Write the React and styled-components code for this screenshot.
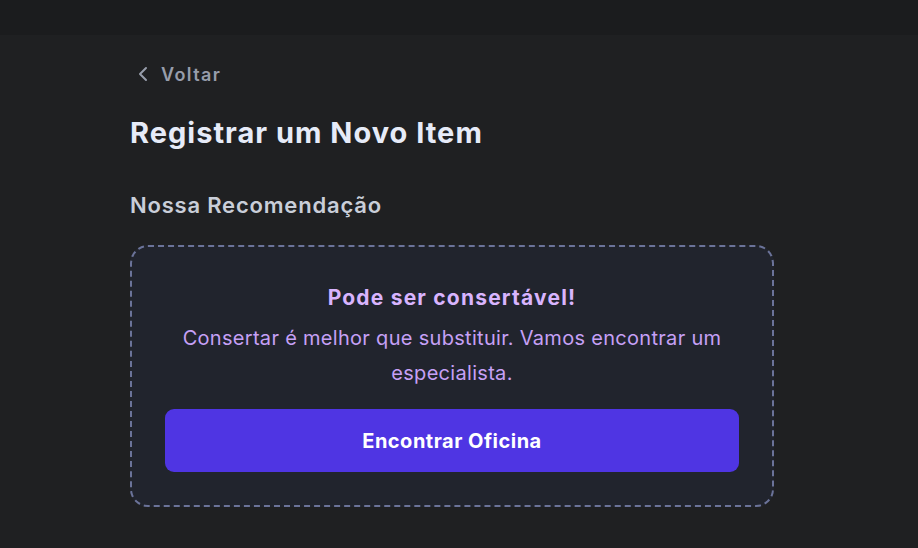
import React from "react";
import styled, { createGlobalStyle } from "styled-components";

const Global = createGlobalStyle`
  html, body { margin: 0; padding: 0; background: #1f2022; }
  body { font-family: Inter, "Noto Sans", sans-serif; -webkit-font-smoothing: antialiased; }
  * { box-sizing: border-box; }
`;

const Page = styled.div`
  min-height: 548px;
  background: #1f2022;
  display: flex;
  flex-direction: column;
`;

const TopBar = styled.div`
  height: 35px;
  background: #1b1c1e;
`;

const Main = styled.main`
  width: 644px;
  margin-left: 130px;
  padding-top: 25px;
  display: flex;
  flex-direction: column;
`;

const Back = styled.button`
  display: flex;
  align-items: center;
  gap: 11px;
  background: none;
  border: none;
  padding: 0 0 0 6px;
  color: #979dab;
  font-family: inherit;
  font-size: 18px;
  font-weight: 600;
  letter-spacing: 1.4px;
  height: 28px;
  cursor: pointer;
  align-self: flex-start;
`;

const Heading = styled.h1`
  margin: 27px 0 0;
  font-size: 29px;
  font-weight: 700;
  line-height: 36px;
  letter-spacing: 1px;
  color: #e6ebf8;
`;

const SubHeading = styled.h2`
  margin: 39px 0 0;
  font-size: 22px;
  font-weight: 600;
  line-height: 30px;
  letter-spacing: 0.8px;
  color: #c9ced9;
`;

const Card = styled.section`
  margin-top: 25px;
  border: 2px dashed #6b7399;
  border-radius: 18px;
  background: #21242d;
  padding: 37px 33px 33px;
  display: flex;
  flex-direction: column;
  align-items: center;
  text-align: center;
`;

const CardTitle = styled.h3`
  margin: 0;
  font-size: 21px;
  font-weight: 700;
  line-height: 28px;
  letter-spacing: 1.2px;
  color: #d8b4fe;
`;

const CardText = styled.p`
  margin: 9px 0 0;
  font-size: 20px;
  line-height: 35px;
  letter-spacing: 0.3px;
  color: #c6a0f6;
  max-width: 570px;
`;

const PrimaryButton = styled.button`
  margin-top: 18px;
  width: 100%;
  height: 63px;
  border: none;
  border-radius: 9px;
  background: #4f35e3;
  color: #ffffff;
  font-family: inherit;
  font-size: 20px;
  font-weight: 700;
  letter-spacing: 0.5px;
  cursor: pointer;
`;

export default function App() {
  return (
    <Page>
      <Global />
      <TopBar />
      <Main>
        <Back>
          <svg width="14" height="16" viewBox="0 0 14 16" fill="none">
            <path d="M10 2 L4 8 L10 14" stroke="#979dab" strokeWidth="2" strokeLinecap="round" strokeLinejoin="round" />
          </svg>
          Voltar
        </Back>
        <Heading>Registrar um Novo Item</Heading>
        <SubHeading>Nossa Recomendação</SubHeading>
        <Card>
          <CardTitle>Pode ser consertável!</CardTitle>
          <CardText>Consertar é melhor que substituir. Vamos encontrar um especialista.</CardText>
          <PrimaryButton>Encontrar Oficina</PrimaryButton>
        </Card>
      </Main>
    </Page>
  );
}
